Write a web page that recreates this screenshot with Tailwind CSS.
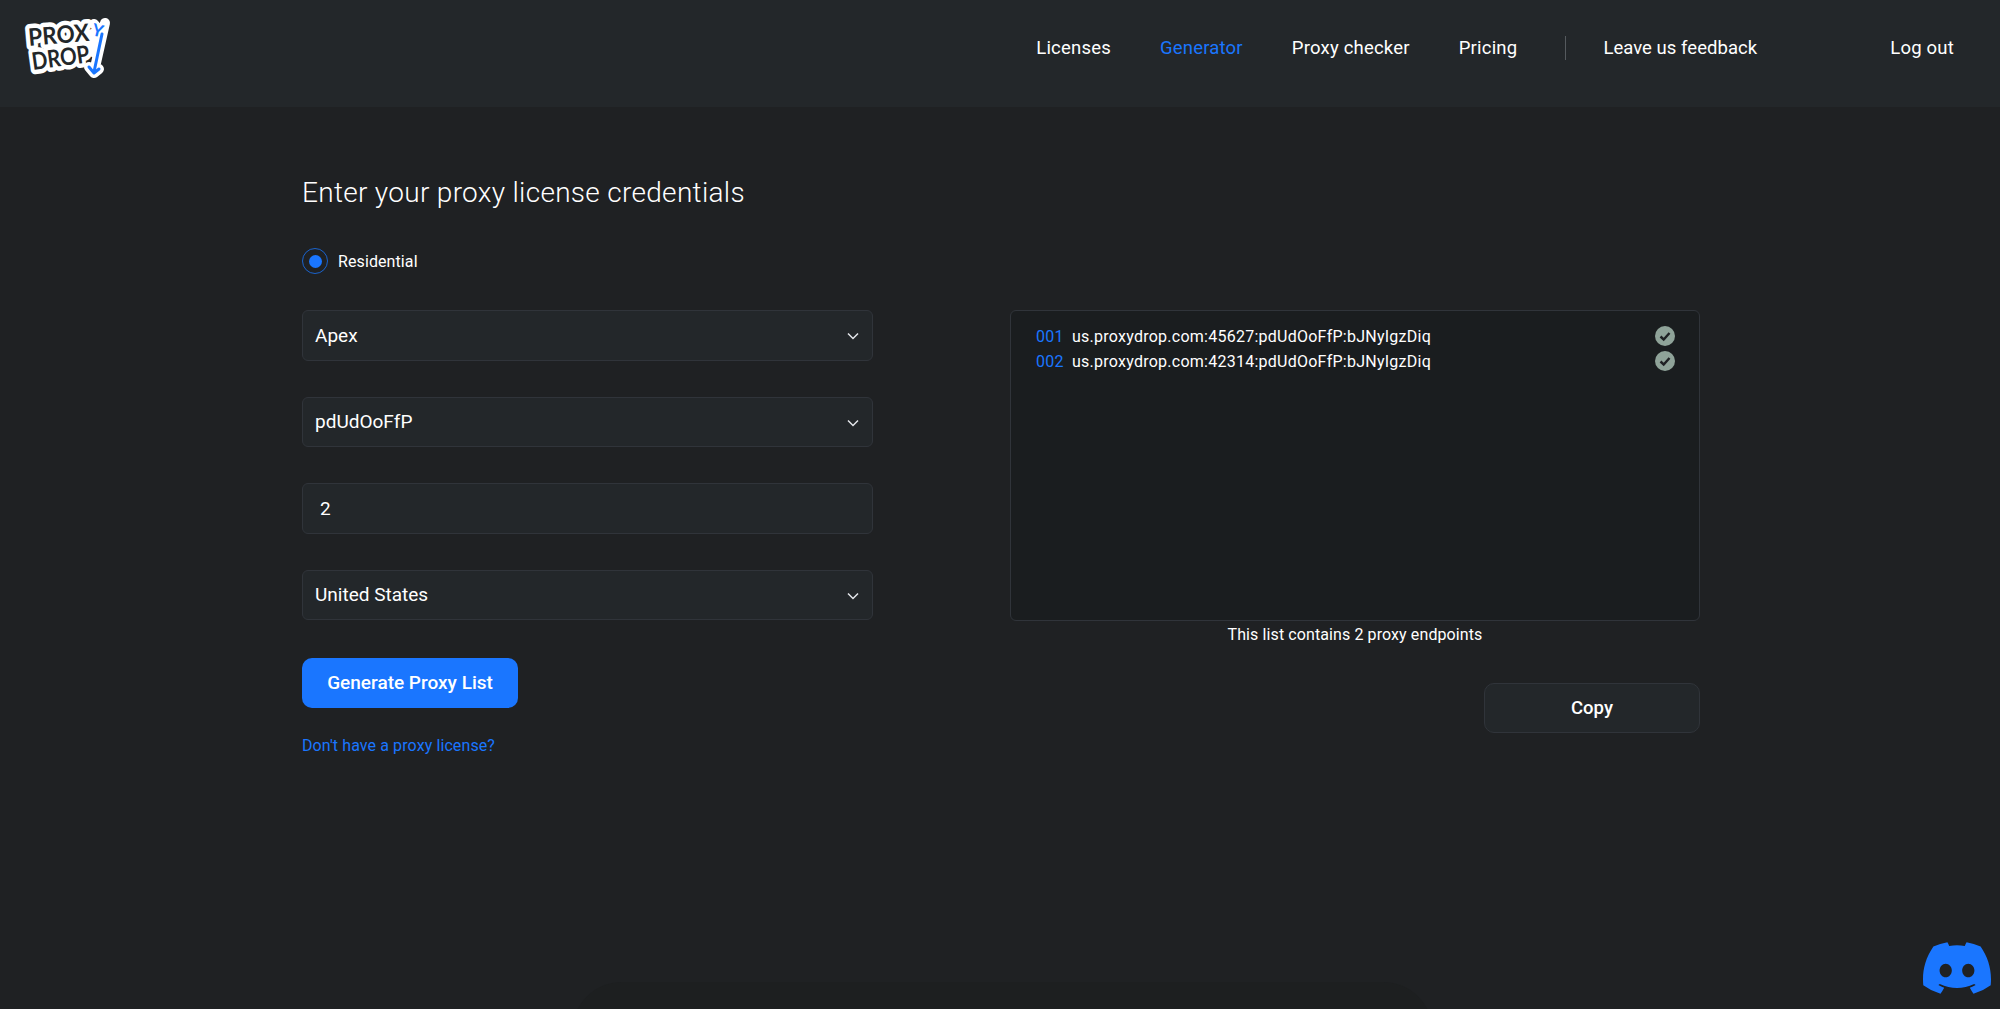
<!DOCTYPE html>
<html lang="en">
<head>
<meta charset="utf-8">
<title>Proxy Generator</title>
<script src="https://cdn.jsdelivr.net/npm/@tailwindcss/browser@4"></script>
</head>
<body class="relative m-0 h-[1009px] overflow-hidden bg-[#1f2123] font-['Roboto',sans-serif] text-white">
<div class="absolute left-[572px] top-[982px] w-[861px] h-[60px] rounded-t-[50px] bg-[#1d1f20]"></div>
<header class="relative h-[107px] bg-[#23272a] flex items-center pl-[24px] pr-[46px]">
  <svg class="w-[88px] h-[62px] -mt-[9px] overflow-visible" viewBox="0 0 88 62" fill="none" aria-label="ProxyDrop logo">
    <defs>
      <g id="logo-letters" font-family="Lato, sans-serif" font-weight="700" font-size="24">
        <text x="5" y="28" transform="rotate(-5 5 28)" textLength="61" lengthAdjust="spacingAndGlyphs">PROX</text>
        <text x="9" y="52" transform="rotate(-8 9 52)" textLength="58" lengthAdjust="spacingAndGlyphs">DROP</text>
      </g>
    </defs>
    <use href="#logo-letters" fill="#fff" stroke="#fff" stroke-width="9" stroke-linejoin="round"/>
    <path d="M20 20 L62 20 L60 42 L20 42Z" fill="#fff"/>
    <path d="M70 6 L77 14 M81 5 L70 54 M65 49 L70 55 L75 51" stroke="#fff" stroke-width="10" stroke-linecap="round" stroke-linejoin="round"/>
    <path d="M64 12 L78 8 L70 40 L62 36Z" fill="#fff"/>
    <use href="#logo-letters" fill="#23272a"/>
    <text x="67" y="17" font-family="Lato, sans-serif" font-size="17" font-weight="700" fill="#1a76ff" transform="rotate(14 67 17)">Y</text>
    <path d="M78 16 L70 54 M65 49 L70 55 L75 51" stroke="#1a76ff" stroke-width="3" stroke-linecap="round" stroke-linejoin="round"/>
  </svg>
  <nav class="ml-auto flex items-center text-[18.5px] leading-[24px] tracking-[0.2px] -mt-[11px]">
    <a class="mr-[49px]">Licenses</a>
    <a class="mr-[49px] text-[#1a76ff]">Generator</a>
    <a class="mr-[49px]">Proxy checker</a>
    <a class="mr-[48px]">Pricing</a>
    <span class="w-px h-[24px] bg-[#555a5e] mr-[37px]"></span>
    <a class="tracking-[0.05px]">Leave us feedback</a>
    <a class="ml-[133px]">Log out</a>
  </nav>
</header>
<main class="relative flex pl-[302px]">
  <section class="w-[571px] pt-[65.5px]">
    <h1 class="h-[40px] leading-[40px] text-[28px] font-light tracking-[0.3px] text-white">Enter your proxy license credentials</h1>
    <label class="mt-[35.5px] flex items-center h-[26px] text-[16px] tracking-[0.1px]">
      <span class="w-[26px] h-[26px] rounded-full border border-[#1a63cc] flex items-center justify-center"><span class="w-[13px] h-[13px] rounded-full bg-[#1a76ff]"></span></span>
      <span class="ml-[10px] pt-[2px]">Residential</span>
    </label>
    <div class="mt-[36px] flex flex-col gap-[36px] text-[19px]">
      <div class="h-[50.5px] rounded-[6px] border border-[#30343a] bg-[#23272a] flex items-center justify-between pl-[12px] pr-[13px]">
        <span class="pt-[1px]">Apex</span>
        <svg class="w-[12px] h-[8px] mt-[2px]" viewBox="0 0 12 8" fill="none"><path d="M1 1.500 L6 6.500 L11 1.500" stroke="#e5e7eb" stroke-width="1.500"/></svg>
      </div>
      <div class="h-[50.5px] rounded-[6px] border border-[#30343a] bg-[#23272a] flex items-center justify-between pl-[12px] pr-[13px]">
        <span>pdUdOoFfP</span>
        <svg class="w-[12px] h-[8px] mt-[2px]" viewBox="0 0 12 8" fill="none"><path d="M1 1.500 L6 6.500 L11 1.500" stroke="#e5e7eb" stroke-width="1.500"/></svg>
      </div>
      <div class="h-[50.5px] rounded-[6px] border border-[#30343a] bg-[#23272a] flex items-center pl-[17px]">
        <span class="pt-[1px]">2</span>
      </div>
      <div class="h-[50.5px] rounded-[6px] border border-[#30343a] bg-[#23272a] flex items-center justify-between pl-[12px] pr-[13px]">
        <span class="pt-[1px]">United States</span>
        <svg class="w-[12px] h-[8px] mt-[2px]" viewBox="0 0 12 8" fill="none"><path d="M1 1.500 L6 6.500 L11 1.500" stroke="#e5e7eb" stroke-width="1.500"/></svg>
      </div>
    </div>
    <button class="mt-[38px] block w-[216px] h-[50px] rounded-[10px] bg-[#1a76ff] text-[19px] font-medium">Generate Proxy List</button>
    <a class="mt-[26px] block h-[24px] leading-[24px] text-[16px] tracking-[0.1px] text-[#1a76ff]">Don't have a proxy license?</a>
  </section>
  <section class="ml-[137px] w-[690px] pt-[203px] flex flex-col">
    <div class="h-[311px] rounded-[6px] border border-[#30343a] bg-[#1a1d1f] pt-[12.5px] pl-[25px] pr-[24px] text-[16px] leading-[25.5px] tracking-[0.25px]">
      <div class="flex items-center">
        <span class="w-[36px] text-[#1a76ff]">001</span>
        <span>us.proxydrop.com:45627:pdUdOoFfP:bJNyIgzDiq</span>
        <svg class="ml-auto w-[20px] h-[20px] -mt-[1px]" viewBox="0 0 20 20"><circle cx="10" cy="10" r="10" fill="#8fa399"/><path d="M5.500 10.500 L8.700 13.500 L14.500 7" stroke="#1f2124" stroke-width="2.400" fill="none"/></svg>
      </div>
      <div class="flex items-center">
        <span class="w-[36px] text-[#1a76ff]">002</span>
        <span>us.proxydrop.com:42314:pdUdOoFfP:bJNyIgzDiq</span>
        <svg class="ml-auto w-[20px] h-[20px] -mt-[1px]" viewBox="0 0 20 20"><circle cx="10" cy="10" r="10" fill="#8fa399"/><path d="M5.500 10.500 L8.700 13.500 L14.500 7" stroke="#1f2124" stroke-width="2.400" fill="none"/></svg>
      </div>
    </div>
    <p class="mt-[2px] h-[24px] leading-[24px] text-center text-[16px] tracking-[0.1px]">This list contains 2 proxy endpoints</p>
    <button class="mt-[36px] self-end w-[216px] h-[50px] pt-[2px] rounded-[10px] border border-[#30343a] bg-[#23272a] text-[18.5px] font-medium">Copy</button>
  </section>
</main>
<svg class="fixed right-[9px] bottom-[14px] w-[68px] h-[54px]" viewBox="0 0 127.140 96.360" aria-label="Discord"><path fill="#1a76ff" d="M107.700 8.070A105.150 105.150 0 0 0 81.470 0a72.060 72.060 0 0 0-3.360 6.830 97.680 97.680 0 0 0-29.110 0A72.370 72.370 0 0 0 45.640 0a105.890 105.890 0 0 0-26.250 8.090C2.790 32.650-1.710 56.600.54 80.210a105.730 105.730 0 0 0 32.170 16.150 77.700 77.700 0 0 0 6.890-11.110 68.420 68.420 0 0 1-10.850-5.180c.91-.66 1.800-1.340 2.660-2a75.570 75.570 0 0 0 64.320 0c.87.71 1.760 1.390 2.660 2a68.680 68.680 0 0 1-10.870 5.190 77 77 0 0 0 6.890 11.100 105.250 105.250 0 0 0 32.190-16.140c2.640-27.380-4.510-51.110-18.900-72.150ZM42.450 65.690C36.180 65.690 31 60 31 53s5-12.740 11.430-12.740S54 46 53.890 53s-5.050 12.690-11.440 12.690Zm42.240 0C78.410 65.690 73.250 60 73.250 53s5-12.740 11.440-12.740S96.230 46 96.120 53s-5.040 12.690-11.430 12.690Z"/></svg>
</body>
</html>
